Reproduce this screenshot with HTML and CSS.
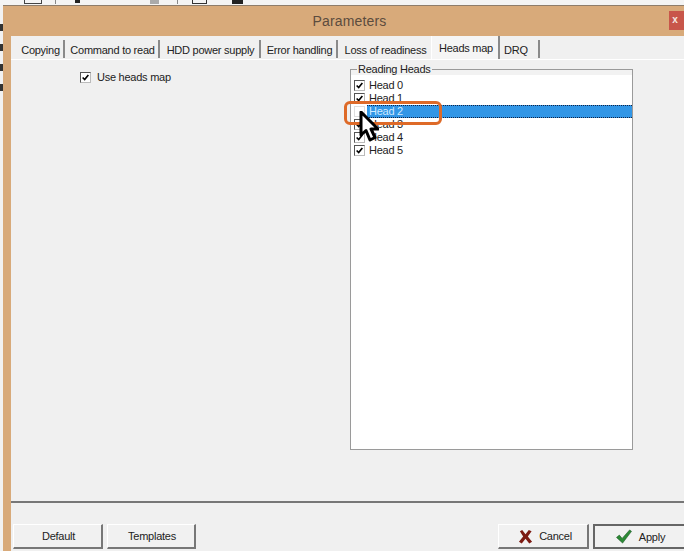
FILE: index.html
```html
<!DOCTYPE html>
<html lang="en">
<head>
<meta charset="utf-8">
<title>Parameters</title>
<link rel="stylesheet" href="styles.css">
</head>
<body>
<div class="toolbar">
  <span class="tool t0"></span><span class="tool t1"></span><span class="tool t2"></span><span class="tool t3"></span><span class="tool t4"></span><span class="tool t5"></span><span class="tool t6"></span>
</div>
<div class="stage">
  <div class="strip"><i></i><i></i><i></i><i></i></div>
  <div class="window">
    <div class="titlebar">
      <div class="title">Parameters</div>
      <div class="close">x</div>
    </div>
    <div class="body">
      <div class="tabs">
        <div class="tab w1">Copying</div>
        <div class="tab w2">Command to read</div>
        <div class="tab w3">HDD power supply</div>
        <div class="tab w4">Error handling</div>
        <div class="tab w5">Loss of readiness</div>
        <div class="tab w6 active">Heads map</div>
        <div class="tab w7">DRQ</div>
      </div>
      <div class="page">
        <label class="use">
          <span class="check"><svg viewBox="0 0 11 11"><path d="M2 5.5 4.5 8 9 2.5" /></svg></span>
          <span>Use heads map</span>
        </label>
        <fieldset class="group">
          <legend>Reading Heads</legend>
          <div class="list">
            <div class="row"><span class="check"><svg viewBox="0 0 11 11"><path d="M2 5.5 4.5 8 9 2.5" /></svg></span><span class="name">Head 0</span></div>
            <div class="row"><span class="check"><svg viewBox="0 0 11 11"><path d="M2 5.5 4.5 8 9 2.5" /></svg></span><span class="name">Head 1</span></div>
            <div class="row"><span class="check off"></span><span class="name sel">Head 2</span></div>
            <div class="row"><span class="check"><svg viewBox="0 0 11 11"><path d="M2 5.5 4.5 8 9 2.5" /></svg></span><span class="name">Head 3</span></div>
            <div class="row"><span class="check"><svg viewBox="0 0 11 11"><path d="M2 5.5 4.5 8 9 2.5" /></svg></span><span class="name">Head 4</span></div>
            <div class="row"><span class="check"><svg viewBox="0 0 11 11"><path d="M2 5.5 4.5 8 9 2.5" /></svg></span><span class="name">Head 5</span></div>
          </div>
        </fieldset>
        <div class="mark"></div>
        <svg class="cursor" viewBox="0 0 20 32"><path d="M2 1V24L7 19.5 11 29 16 26.5 12 18H19Z" fill="#fff" stroke="#000" stroke-width="3" stroke-linejoin="round"/></svg>
      </div>
      <div class="footer">
        <button class="btn b1" type="button">Default</button>
        <button class="btn b2" type="button">Templates</button>
        <span class="spacer"></span>
        <button class="btn b3" type="button"><svg class="ico" viewBox="0 0 16 16"><path d="M2 2.5 4.5 1 8 5.5 11.5 1 14.500 2.500 10.500 8 15 13.500 12 15.500 8 10.500 4 15.500 1 13.500 5.500 8Z" fill="#7c1a12"/></svg>Cancel</button>
        <button class="btn b4" type="button"><svg class="ico ok" viewBox="0 0 18 16"><path d="M1 9 4 6.500 7 10 15 1 17 2.500 7.500 15Z" fill="#2c8a35" stroke="#14501c" stroke-width=".6"/></svg>Apply</button>
      </div>
    </div>
  </div>
</div>
</body>
</html>
```
FILE: styles.css
```css
* { box-sizing: border-box; }
html, body { margin: 0; padding: 0; }
body {
  width: 684px;
  height: 551px;
  overflow: hidden;
  background: #f3f3f3;
  font-family: "Liberation Sans", Arial, sans-serif;
  font-size: 11px;
  letter-spacing: -.25px;
  color: #222;
  display: flex;
  flex-direction: column;
}
.toolbar { height: 5px; flex: none; position: relative; background: #f4f4f4; overflow: hidden; }
.tool { position: absolute; top: 0; height: 4px; }
.t0 { left: 24px; width: 18px; border: 1px solid #444; border-width: 0 1px 1px; }
.t1 { left: 55px; width: 1px; background: #888; }
.t2 { left: 75px; width: 5px; height: 3px; background: #222; }
.t3 { left: 150px; width: 9px; background: #aaa; }
.t6 { left: 177px; width: 1px; background: #888; }
.t4 { left: 192px; width: 15px; border: 1px solid #333; border-top: 0; }
.t5 { left: 232px; width: 11px; background: #222; }
.stage { flex: 1; display: flex; min-height: 0; }
.strip { width: 3px; flex: none; background: #f2f2f2; display: flex; flex-direction: column; gap: 13px; padding-top: 19px; }
.strip i { display: block; width: 3px; height: 7px; background: #333; }
.window { flex: 1; display: flex; flex-direction: column; background: #d8aa7a; border-top: 1px solid #8e7d6b; padding-left: 8px; min-width: 0; }
.titlebar { height: 30px; flex: none; position: relative; display: flex; align-items: center; justify-content: center; padding-left: 4px; }
.title { font-size: 14px; letter-spacing: .15px; color: #5c4c3e; }
.close { position: absolute; right: 0; top: 5px; width: 15px; height: 19px; background: #c8564a; color: #f6e6e0; font-size: 10px; font-weight: bold; text-align: center; line-height: 17px; padding-right: 3px; }
.body { flex: 1; background: #f0f0f0; display: flex; flex-direction: column; min-height: 0; }
.tabs { height: 24px; flex: none; display: flex; align-items: flex-end; padding-left: 3px; border-bottom: 1px solid #fff; }
.tab { height: 18px; margin-bottom: 1px; line-height: 21px; text-align: center; padding-left: 2px; border-right: 2px solid #8a8a8a; white-space: nowrap; flex: none; }
.tab.active { height: 23px; margin-bottom: 0; line-height: 24px; background: #f5f5f5; border-left: 1px solid #fff; }
.w1 { width: 51px; padding-left: 4px; }
.w2 { width: 95px; }
.w3 { width: 101px; }
.w4 { width: 77px; }
.w5 { width: 93px; border-right: 0; }
.w6 { width: 69px; }
.w7 { width: 40px; text-align: left; padding-left: 4px; }
.page { flex: 1; position: relative; display: flex; padding: 8px 51px 0 69px; border-bottom: 2px solid #777; min-height: 0; }
.use { display: flex; align-items: flex-start; gap: 6px; width: 270px; flex: none; line-height: 13px; height: 14px; margin-top: 3px; }
.check { width: 11px; height: 11px; flex: none; background: #fff; border: 1px solid #555; border-right-color: #bbb; border-bottom-color: #bbb; display: block; margin-top: 1px; }
.check svg { display: block; width: 9px; height: 9px; fill: none; stroke: #000; stroke-width: 2; }
.check.off { border-color: #dedede; }
.group { flex: 1; margin: -5px 0 51px; padding: 0; border: 1px solid #9a9a9a; background: #f2f2f2; min-width: 0; position: relative; }
.group legend { padding: 0 1px; margin-left: 6px; line-height: 12px; }
.list { background: #fff; height: 100%; padding: 4px 0 0 3px; }
.row { display: flex; height: 13px; gap: 2px; align-items: flex-start; line-height: 13px; }
.name { flex: 1; padding-left: 2px; }
.name.sel { background: #3296e6; color: #cfeaff; border: 1px dotted #124; border-width: 1px 0; line-height: 11px; }
.mark { position: absolute; left: 333px; top: 41px; width: 98px; height: 24px; border: 3px solid #de6a28; border-radius: 6px; }
.cursor { position: absolute; left: 348px; top: 51px; width: 20px; height: 32px; }
.footer { height: 48px; flex: none; display: flex; align-items: flex-start; padding: 21px 0 0 2px; gap: 4px; }
.btn { height: 25px; padding: 0; font: inherit; letter-spacing: inherit; color: #222; background: #f1f1f1; border: 1px solid; border-color: #fff #777 #777 #fff; border-width: 1px 2px 2px 1px; display: flex; align-items: center; justify-content: center; gap: 6px; flex: none; }
.b1 { width: 90px; padding-left: 2px; }
.b2 { width: 89px; padding-left: 2px; }
.spacer { flex: 1; }
.b3 { width: 91px; padding-left: 4px; }
.b4 { width: 92px; margin-right: -1px; border: 2px solid #666; border-right-width: 0; }
.ico { width: 15px; height: 15px; display: block; }
.ok { width: 18px; }
```
